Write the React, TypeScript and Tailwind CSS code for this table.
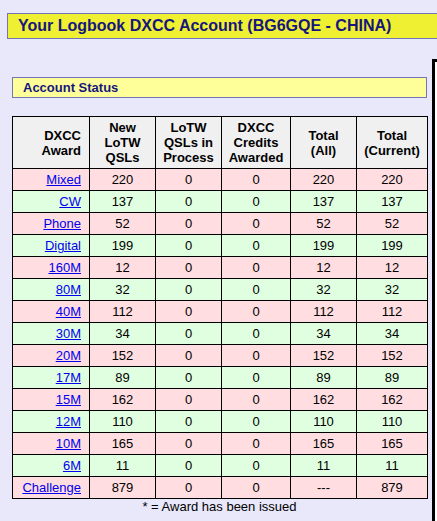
import React from "react";

const rows: [string, string, string, string, string, string][] = [
  ["Mixed", "220", "0", "0", "220", "220"],
  ["CW", "137", "0", "0", "137", "137"],
  ["Phone", "52", "0", "0", "52", "52"],
  ["Digital", "199", "0", "0", "199", "199"],
  ["160M", "12", "0", "0", "12", "12"],
  ["80M", "32", "0", "0", "32", "32"],
  ["40M", "112", "0", "0", "112", "112"],
  ["30M", "34", "0", "0", "34", "34"],
  ["20M", "152", "0", "0", "152", "152"],
  ["17M", "89", "0", "0", "89", "89"],
  ["15M", "162", "0", "0", "162", "162"],
  ["12M", "110", "0", "0", "110", "110"],
  ["10M", "165", "0", "0", "165", "165"],
  ["6M", "11", "0", "0", "11", "11"],
  ["Challenge", "879", "0", "0", "---", "879"],
];

export default function App() {
  return (
    <div
      className="w-[437px] h-[521px] overflow-hidden bg-[#e8e8fa]"
      style={{ fontFamily: '"Liberation Sans", Arial, sans-serif' }}
    >
      <div className="pt-[13px] pl-[7px]">
        <div className="w-[640px] h-[26px] border border-[#7474b8] bg-[#f0f032] flex items-center pl-[10px]">
          <span className="text-[16px] font-bold text-[#16167e] leading-none">
            Your Logbook DXCC Account (BG6GQE - CHINA)
          </span>
        </div>
      </div>
      <div className="flex mt-[20px]">
        <div className="ml-[12px] w-[415px] pt-[18px] shrink-0">
          <div className="h-[21px] border border-[#7474b8] bg-[#ffff99] flex items-center pl-[10px]">
            <span className="text-[13px] font-bold text-[#16167e] leading-none">Account Status</span>
          </div>
          <table className="mt-[18px] w-[415px] border-collapse table-fixed text-[13px] leading-[15px] text-black">
            <colgroup>
              <col className="w-[77px]" />
              <col className="w-[66px]" />
              <col className="w-[66px]" />
              <col className="w-[69px]" />
              <col className="w-[66px]" />
              <col className="w-[71px]" />
            </colgroup>
            <thead>
              <tr className="h-[52px] bg-[#f0f0f0]">
                <th className="border border-black font-bold text-right pr-[8px]">DXCC<br />Award</th>
                <th className="border border-black font-bold text-center">New<br />LoTW<br />QSLs</th>
                <th className="border border-black font-bold text-center">LoTW<br />QSLs in<br />Process</th>
                <th className="border border-black font-bold text-center">DXCC<br />Credits<br />Awarded</th>
                <th className="border border-black font-bold text-center">Total<br />(All)</th>
                <th className="border border-black font-bold text-center">Total<br />(Current)</th>
              </tr>
            </thead>
            <tbody>
              {rows.map((r, i) => (
                <tr key={r[0]} className={`h-[22px] ${i % 2 === 0 ? "bg-[#ffdde0]" : "bg-[#e0ffe0]"}`}>
                  <td className="border border-black text-right pr-[8px] p-0">
                    <a href="#" className="text-[#0000ee] underline">{r[0]}</a>
                  </td>
                  {r.slice(1).map((v, j) => (
                    <td key={j} className="border border-black text-center p-0">{v}</td>
                  ))}
                </tr>
              ))}
            </tbody>
          </table>
          <div className="text-center text-[13px] leading-[15px] text-black">* = Award has been issued</div>
        </div>
        <div className="ml-[5px] w-[200px] h-[500px] border-l-[3px] border-t-[3px] border-black bg-white shrink-0" />
      </div>
    </div>
  );
}
